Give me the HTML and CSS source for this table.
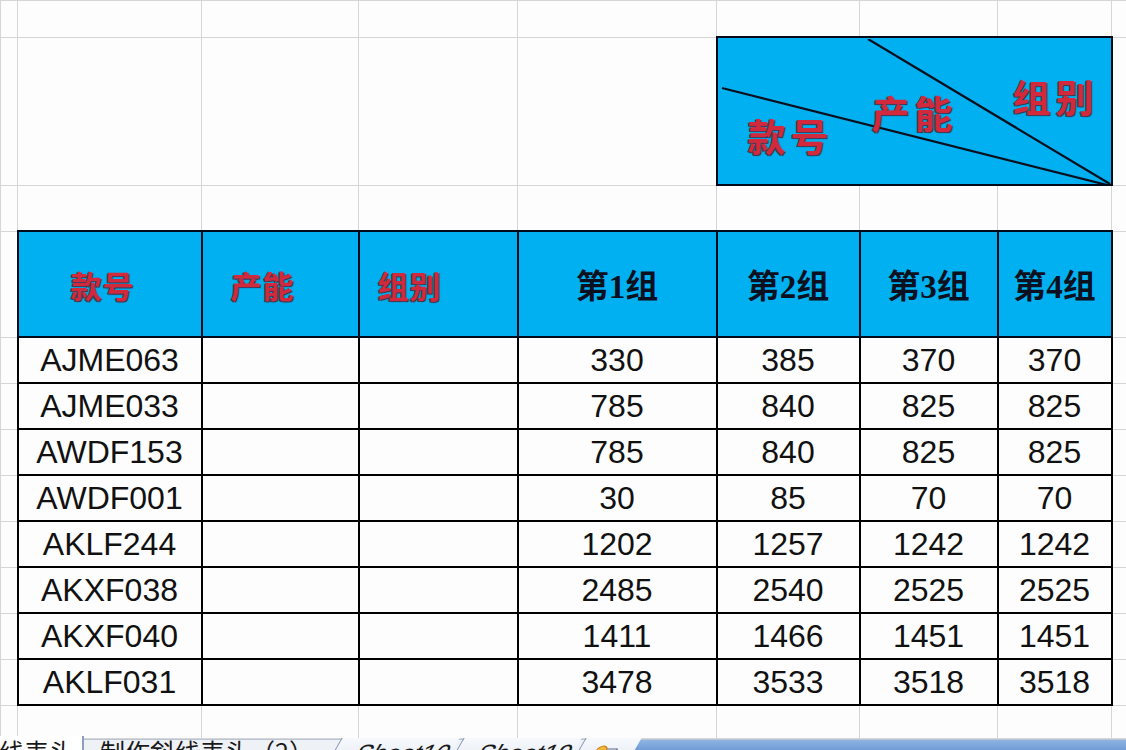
FILE: index.html
```html
<!DOCTYPE html>
<html lang="zh-CN">
<head>
<meta charset="utf-8">
<title>制作斜线表头</title>
<link rel="stylesheet" href="styles.css">
</head>
<body>
<div class="sheet">
  <table class="grid">
    <colgroup>
      <col class="c0"><col class="c1"><col class="c2"><col class="c3"><col class="c4"><col class="c5"><col class="c6"><col class="c7"><col class="c8">
    </colgroup>
    <tr class="r0"><td></td><td></td><td></td><td></td><td></td><td></td><td></td><td></td><td></td></tr>
    <tr class="r1">
      <td></td><td></td><td></td><td></td><td></td>
      <td colspan="3" class="box">
        <div class="box-inner">
          <svg class="diag" viewBox="0 0 393 145" preserveAspectRatio="none">
            <line x1="4" y1="49" x2="393" y2="147" stroke="#0a0f1e" stroke-width="2.2"/>
            <line x1="150" y1="0" x2="392" y2="145" stroke="#0a0f1e" stroke-width="2.2"/>
          </svg>
          <span class="lbl lbl-a">款号</span>
          <span class="lbl lbl-b">产能</span>
          <span class="lbl lbl-c">组别</span>
        </div>
      </td>
      <td></td>
    </tr>
    <tr class="r2"><td></td><td></td><td></td><td></td><td></td><td></td><td></td><td></td><td></td></tr>
    <tr class="hdr">
      <td></td>
      <td class="t red ra">款号</td>
      <td class="t red rb">产能</td>
      <td class="t red rc">组别</td>
      <td class="t blk">第1组</td>
      <td class="t blk">第2组</td>
      <td class="t blk">第3组</td>
      <td class="t blk">第4组</td>
      <td></td>
    </tr>
    <tr class="row"><td></td><td class="t">AJME063</td><td class="t"></td><td class="t"></td><td class="t">330</td><td class="t">385</td><td class="t">370</td><td class="t">370</td><td></td></tr>
    <tr class="row"><td></td><td class="t">AJME033</td><td class="t"></td><td class="t"></td><td class="t">785</td><td class="t">840</td><td class="t">825</td><td class="t">825</td><td></td></tr>
    <tr class="row"><td></td><td class="t">AWDF153</td><td class="t"></td><td class="t"></td><td class="t">785</td><td class="t">840</td><td class="t">825</td><td class="t">825</td><td></td></tr>
    <tr class="row"><td></td><td class="t">AWDF001</td><td class="t"></td><td class="t"></td><td class="t">30</td><td class="t">85</td><td class="t">70</td><td class="t">70</td><td></td></tr>
    <tr class="row"><td></td><td class="t">AKLF244</td><td class="t"></td><td class="t"></td><td class="t">1202</td><td class="t">1257</td><td class="t">1242</td><td class="t">1242</td><td></td></tr>
    <tr class="row"><td></td><td class="t">AKXF038</td><td class="t"></td><td class="t"></td><td class="t">2485</td><td class="t">2540</td><td class="t">2525</td><td class="t">2525</td><td></td></tr>
    <tr class="row"><td></td><td class="t">AKXF040</td><td class="t"></td><td class="t"></td><td class="t">1411</td><td class="t">1466</td><td class="t">1451</td><td class="t">1451</td><td></td></tr>
    <tr class="row"><td></td><td class="t">AKLF031</td><td class="t"></td><td class="t"></td><td class="t">3478</td><td class="t">3533</td><td class="t">3518</td><td class="t">3518</td><td></td></tr>
    <tr class="rlast"><td></td><td></td><td></td><td></td><td></td><td></td><td></td><td></td><td></td></tr>
  </table>
  <div class="tabs">
    <div class="tab active">斜线表头</div>
    <div class="tab plain">制作斜线表头（2）</div>
    <div class="tab slant">Sheet10</div>
    <div class="tab slant">Sheet19</div>
    <div class="tab slant icon-tab">
      <svg width="30" height="20" viewBox="0 0 30 20">
        <rect x="9" y="4" width="14" height="14" fill="#f4f6fa" stroke="#5a6a8a" stroke-width="1.2"/>
        <circle cx="8" cy="6" r="5" fill="#f2b53a" stroke="#c07a10" stroke-width="1"/>
      </svg>
    </div>
    <div class="tabfill"></div>
  </div>
</div>
</body>
</html>
```

FILE: styles.css
```css
html, body {
  margin: 0;
  padding: 0;
  background: #fdfdfd;
  overflow: hidden;
  width: 1126px;
  height: 750px;
}

.sheet {
  width: 1126px;
  height: 750px;
  overflow: hidden;
  font-family: "Liberation Sans", "Noto Sans CJK SC", sans-serif;
}

.grid {
  border-collapse: collapse;
  table-layout: fixed;
  width: 1126px;
}

.c0 { width: 17px; }
.c1 { width: 184px; }
.c2 { width: 157px; }
.c3 { width: 159px; }
.c4 { width: 199px; }
.c5 { width: 143px; }
.c6 { width: 138px; }
.c7 { width: 114px; }
.c8 { width: 15px; }

.grid td {
  border: 1px solid #d6d6d6;
  padding: 0;
  height: 0;
}

.r0 td { height: 35px; }
.r1 td { height: 146px; }
.r2 td { height: 44px; }
.hdr td { height: 104px; }
.row td { height: 44px; }
.rlast td { height: 32px; }

.box {
  background: #00b0f0;
  border: 2px solid #050a1a !important;
  position: relative;
}

.box-inner {
  position: relative;
  height: 145px;
}

.diag {
  position: absolute;
  left: 0;
  top: 0;
  width: 100%;
  height: 100%;
}

.lbl {
  position: absolute;
  font-family: "Noto Sans CJK SC", sans-serif;
  font-weight: 700;
  font-size: 38px;
  line-height: 40px;
  letter-spacing: 5px;
  color: #d22a3c;
  text-shadow: -1px 1px 0 #4a3a5a, 1px 1px 1px #402030;
}

.lbl-a { left: 30px; top: 76px; }
.lbl-b { left: 154px; top: 53px; }
.lbl-c { left: 295px; top: 37px; }

.grid td.t {
  border: 2px solid #000;
  text-align: center;
  vertical-align: middle;
  font-size: 32px;
  color: #111;
  white-space: nowrap;
}

.hdr td.t {
  background: #00b0f0;
  border-color: #050a1a;
}

.red {
  font-family: "Noto Sans CJK SC", sans-serif;
  font-weight: 700;
  font-size: 31px !important;
  color: #d22a3c !important;
  letter-spacing: 1px;
  text-shadow: -1px 1px 0 #4a3a5a, 1px 1px 1px #402030;
}

.grid td.ra { text-align: left; padding-left: 52px; }
.grid td.rb { text-align: left; padding-left: 28px; }
.grid td.rc { text-align: left; padding-left: 18px; }

.blk {
  font-family: "Liberation Serif", "Noto Sans CJK SC", serif;
  font-weight: 700;
  font-size: 33px !important;
  color: #0b1020 !important;
}

.tabs {
  display: flex;
  align-items: flex-start;
  height: 40px;
  background: #eef1f6;
  border-top: 1px solid #b9c4d6;
  font-family: "Noto Sans CJK SC", sans-serif;
  font-size: 25px;
  line-height: 30px;
  color: #1a1a1a;
}

.tab {
  height: 34px;
  padding: 0 12px;
  box-sizing: border-box;
  white-space: nowrap;
  margin-top: -4px;
}

.tab.active {
  background: #ffffff;
  margin-left: -36px;
  padding: 0 8px 0 10px;
  border-right: 2px solid #8ea0bf;
  border-bottom: 1px solid #8ea0bf;
}

.tab.plain {
  padding: 0 4px 0 16px;
}

.tab.slant {
  font-family: "Liberation Sans", sans-serif;
  width: 118px;
  padding: 0 0 0 22px;
  background: linear-gradient(180deg, #f7f9fc, #dfe6f1);
  border-left: 1px solid #8093b3;
  transform: skewX(-30deg);
  transform-origin: bottom left;
  margin-left: 4px;
  margin-top: -2px;
}

.tab.icon-tab {
  width: 56px;
  padding: 3px 0 0 14px;
}

.tabfill {
  flex: 1;
  height: 40px;
  margin-left: 6px;
  background: linear-gradient(180deg, #8fb3e2 0%, #5d8fd0 40%, #4a7cc1 100%);
}
```
